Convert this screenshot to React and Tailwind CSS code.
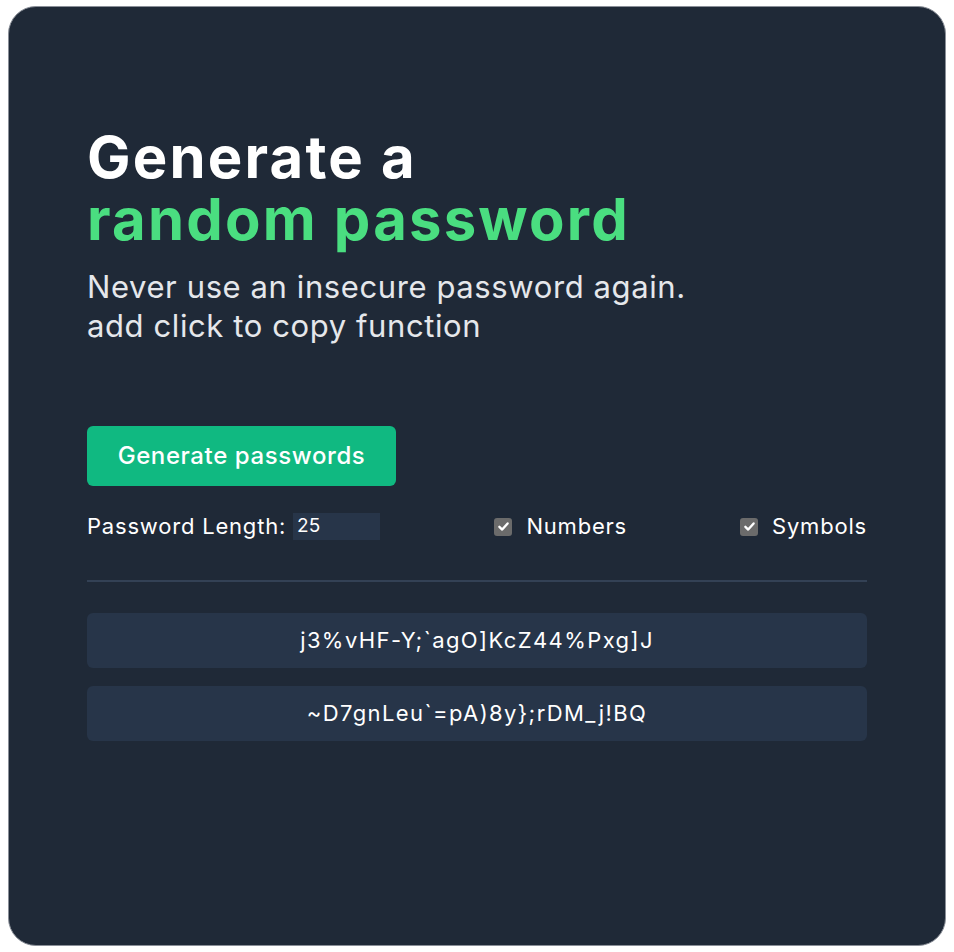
import React, { useState } from 'react';

const passwords = ['j3%vHF-Y;`agO]KcZ44%Pxg]J', '~D7gnLeu`=pA)8y};rDM_j!BQ'];

const CheckBox = ({ label }) => (
  <label className="flex items-center gap-[14px] cursor-pointer">
    <span className="w-[18px] h-[18px] rounded-[3px] bg-[#6b6b6b] flex items-center justify-center">
      <svg width="13" height="13" viewBox="0 0 12 12" fill="none">
        <path d="M2.2 6.3 L4.8 8.8 L9.8 3.2" stroke="#fff" strokeWidth="2.2" strokeLinecap="round" strokeLinejoin="round" />
      </svg>
    </span>
    <span className="text-[22px] tracking-[0.8px] text-white">{label}</span>
  </label>
);

const App = () => {
  const [length, setLength] = useState(25);

  return (
    <div className="bg-white w-[954px] h-[952px] pt-[6px] pl-[8px] font-['Inter',sans-serif]">
      <div className="w-[938px] h-[940px] rounded-[28px] border border-[#8a8f98] bg-[#1f2937] px-[78px] pt-[119px]">
        <h1 className="text-[58px] leading-[62px] font-bold tracking-[2.2px]">
          <div className="text-white">Generate a</div>
          <div className="text-[#4ade80]">random password</div>
        </h1>
        <p className="mt-[17px] text-[31px] leading-[39px] tracking-[0.6px] text-[#e5e7eb]">
          Never use an insecure password again.
          <br />
          add click to copy function
        </p>

        <button className="mt-[81px] w-[309px] h-[60px] rounded-[6px] bg-[#10b981] text-white text-[24px] tracking-[0.6px] font-medium">
          Generate passwords
        </button>

        <div className="mt-[24px] flex items-center justify-between">
          <div className="flex items-center gap-[7px]">
            <span className="text-[22px] tracking-[0.8px] text-white">Password Length:</span>
            <input
              type="number"
              value={length}
              onChange={(e) => setLength(e.target.value)}
              className="w-[87px] h-[27px] bg-[#273549] text-white text-[19px] px-[4px] outline-none"
            />
          </div>
          <div className="flex items-center gap-[113px]">
            <CheckBox label="Numbers" />
            <CheckBox label="Symbols" />
          </div>
        </div>

        <hr className="mt-[37px] border-0 h-[2px] bg-[#334155]" />

        <div className="mt-[31px] flex flex-col gap-[18px]">
          {passwords.map((pw) => (
            <div
              key={pw}
              className="h-[55px] rounded-[6px] bg-[#273549] flex items-center justify-center text-[22px] tracking-[1.4px] text-white"
            >
              {pw}
            </div>
          ))}
        </div>
      </div>
    </div>
  );
};

export default App;
